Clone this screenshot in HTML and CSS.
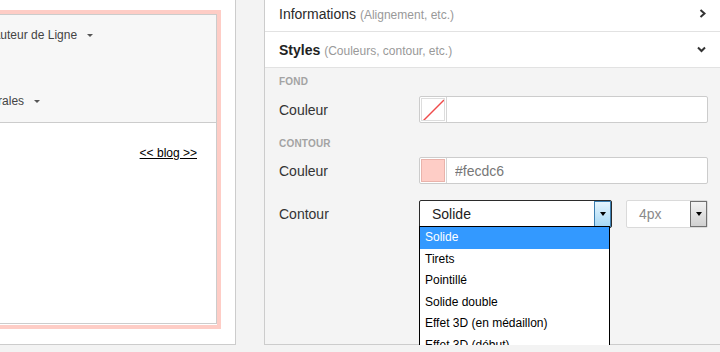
FILE: index.html
```html
<!DOCTYPE html>
<html>

<head>
    <title>Éditeur de bloc</title>
    <link rel="stylesheet" href="styles.css">
</head>

<body>
    <div class="workspace">
        <div class="preview">
            <div class="preview-border">
                <div class="preview-frame">
                    <div class="toolbar">
                        <div class="tool tool-line">Hauteur de Ligne <span class="caret"></span></div>
                        <div class="tool tool-general">Options Générales <span class="caret"></span></div>
                    </div>
                    <div class="preview-content">
                        <a href="#" class="blog-link">&lt;&lt; blog &gt;&gt;</a>
                    </div>
                </div>
            </div>
        </div>

        <div class="panel">
            <div class="section-head">
                <div class="section-title">Informations <span class="section-hint">(Alignement, etc.)</span></div>
                <svg class="chevron" width="7" height="9" viewBox="0 0 7 9" fill="none" stroke="currentColor" stroke-width="2">
                    <polyline points="1.5,1 5.5,4.5 1.5,8" />
                </svg>
            </div>
            <div class="section-head">
                <div class="section-title"><strong>Styles</strong> <span class="section-hint">(Couleurs, contour, etc.)</span></div>
                <svg class="chevron" width="9" height="7" viewBox="0 0 9 7" fill="none" stroke="currentColor" stroke-width="2">
                    <polyline points="1,1.5 4.5,5 8,1.5" />
                </svg>
            </div>

            <div class="panel-body">
                <div class="group">
                    <div class="group-title">Fond</div>
                    <div class="form-row">
                        <label>Couleur</label>
                        <div class="color-field">
                            <span class="swatch">
                                <span class="swatch-box swatch-none">
                                    <svg width="23" height="23" viewBox="0 0 23 23">
                                        <line x1="1" y1="22" x2="22" y2="1" stroke="#ef4b4b" stroke-width="1.4" />
                                    </svg>
                                </span>
                            </span>
                            <input type="text" value="">
                        </div>
                    </div>
                </div>

                <div class="group">
                    <div class="group-title">Contour</div>
                    <div class="form-row">
                        <label>Couleur</label>
                        <div class="color-field">
                            <span class="swatch">
                                <span class="swatch-box swatch-pink"></span>
                            </span>
                            <input type="text" value="#fecdc6">
                        </div>
                    </div>
                    <div class="form-row form-row-select">
                        <label>Contour</label>
                        <div class="select select-style">
                            <span class="select-value">Solide</span>
                            <span class="select-btn select-btn-active"><span class="arrow"></span></span>
                            <ul class="select-menu">
                                <li class="selected">Solide</li>
                                <li>Tirets</li>
                                <li>Pointillé</li>
                                <li>Solide double</li>
                                <li>Effet 3D (en médaillon)</li>
                                <li>Effet 3D (début)</li>
                            </ul>
                        </div>
                        <div class="select select-width">
                            <span class="select-value">4px</span>
                            <span class="select-btn"><span class="arrow"></span></span>
                        </div>
                    </div>
                </div>
            </div>
        </div>
    </div>
</body>

</html>
```

FILE: styles.css
```css
:root {
    --page: #f3f3f3;
    --border: #cccccc;
    --line: #e2e2e2;
    --text: #333333;
    --text-muted: #999999;
    --pink: #fecdc6;
    --highlight: #3399ff;
}

* {
    margin: 0;
    padding: 0;
    box-sizing: border-box;
}

body {
    font-family: 'Liberation Sans', Arial, sans-serif;
    color: var(--text);
    background: var(--page);
    overflow: hidden;
}

.workspace {
    display: flex;
    align-items: flex-start;
}

/* Preview card (left, partly scrolled out) */
.preview {
    width: 336px;
    height: 345px;
    margin-left: -100px;
    padding: 10px 14px 15px 10px;
    background: white;
    border-right: 1px solid var(--border);
    border-bottom: 1px solid var(--border);
}

.preview-border {
    border: 4px solid var(--pink);
    padding-bottom: 1px;
}

.preview-frame {
    height: 310px;
    border: 1px solid var(--border);
    background: white;
}

.toolbar {
    display: flex;
    flex-direction: column;
    gap: 42px;
    padding: 8px 0 9px;
    background: #f7f7f7;
    border-bottom: 1px solid var(--border);
}

.tool {
    display: flex;
    align-items: center;
    height: 24px;
    font-size: 12px;
    color: #444;
    white-space: nowrap;
}

.tool-line {
    padding-left: 70px;
}

.tool-general {
    padding-left: 9px;
}

.caret {
    display: inline-block;
    margin-left: 10px;
    border-left: 3px solid transparent;
    border-right: 3px solid transparent;
    border-top: 3px solid #555;
}

.preview-content {
    padding: 21px 19px 0 0;
    text-align: right;
    line-height: 15px;
}

.blog-link {
    font-size: 12px;
    color: #000;
}

/* Settings panel */
.panel {
    flex: 1;
    margin-left: 28px;
    margin-top: -4px;
    background: white;
    border-left: 1px solid var(--border);
    border-bottom: 1px solid var(--border);
}

.section-head {
    display: flex;
    align-items: center;
    justify-content: space-between;
    height: 36px;
    padding: 0 14px;
    border-bottom: 1px solid var(--line);
}

.section-title {
    font-size: 14px;
    color: #2a2a2a;
}

.section-title strong {
    color: #222;
}

.section-hint {
    font-size: 12px;
    color: var(--text-muted);
}

.chevron {
    color: #333;
}

.panel-body {
    height: 276px;
    padding: 7px 12px 0 14px;
    background: #f4f4f4;
}

.group {
    margin-bottom: 14px;
}

.group-title {
    font-size: 10px;
    font-weight: bold;
    letter-spacing: 0.2px;
    line-height: 14px;
    text-transform: uppercase;
    color: #a3a3a3;
    margin-bottom: 7px;
}

.group + .group .group-title {
    margin-bottom: 6px;
}

.form-row {
    display: flex;
    align-items: center;
}

.form-row label {
    width: 140px;
    font-size: 14px;
    color: var(--text);
}

.form-row-select {
    margin-top: 16px;
    gap: 14px;
}

.form-row-select label {
    margin-right: -14px;
}

.color-field {
    flex: 1;
    display: flex;
    height: 27px;
    background: white;
    border: 1px solid var(--border);
    border-radius: 2px;
}

.swatch {
    width: 27px;
    padding: 1px;
    border-right: 1px solid #d6d6d6;
}

.swatch-box {
    display: block;
    width: 100%;
    height: 100%;
}

.swatch-none {
    border: 1px solid #dddddd;
    overflow: hidden;
}

.swatch-none svg {
    display: block;
}

.swatch-pink {
    background: var(--pink);
    border: 1px solid #e9b3ab;
}

.color-field input {
    flex: 1;
    min-width: 0;
    border: none;
    outline: none;
    padding-left: 8px;
    font-family: inherit;
    font-size: 14px;
    color: #777;
    background: transparent;
}

/* Select boxes */
.select {
    position: relative;
    display: flex;
    align-items: center;
    height: 28px;
    padding-left: 12px;
    background: white;
    border-radius: 2px;
    font-size: 14px;
}

.select-style {
    width: 193px;
    border: 1px solid #2b2b2b;
    color: #222;
}

.select-width {
    flex: 1;
    border: 1px solid #dadada;
    color: #8a8a8a;
}

.select-value {
    flex: 1;
}

.select-btn {
    display: flex;
    align-items: center;
    justify-content: center;
    width: 17px;
    align-self: stretch;
    border: 1px solid #707070;
    background: linear-gradient(#f3f3f3, #d0d0d0);
}

.select-btn-active {
    border-color: #3c7fb1;
    background: linear-gradient(#e6f5fd, #a6d8f5);
}

.arrow {
    border-left: 3.5px solid transparent;
    border-right: 3.5px solid transparent;
    border-top: 4px solid #000;
}

.select-menu {
    position: absolute;
    top: calc(100% - 1px);
    left: -1px;
    width: 191px;
    list-style: none;
    background: white;
    border: 1px solid #000;
    font-size: 12px;
    color: #000;
    z-index: 2;
}

.select-menu li {
    height: 21.5px;
    line-height: 21.5px;
    padding-left: 5px;
    white-space: nowrap;
}

.select-menu li.selected {
    background: var(--highlight);
    color: white;
}
```
